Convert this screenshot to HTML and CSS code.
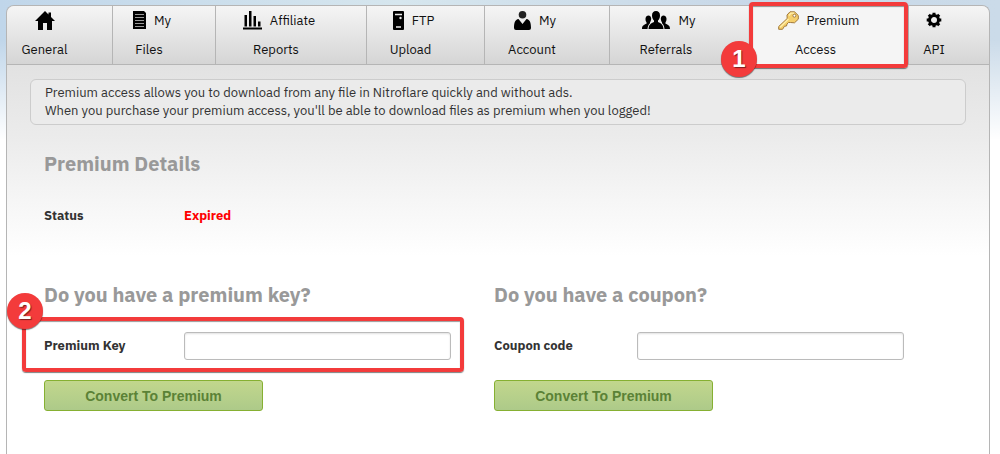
FILE: index.html
```html
<!DOCTYPE html>
<html lang="en">
<head>
  <meta charset="UTF-8" />
  <meta name="viewport" content="width=device-width, initial-scale=1.0"/>
  <title>Premium Access</title>
  <link rel="stylesheet" href="styles.css">
</head>
<body>
  <div class="panel">
    <nav class="tabs">
      <a class="tab" href="#">
        <span class="tab-top">
          <svg width="20" height="20" viewBox="0 0 20 20"><path d="M10 0 L13.5 3.4 V1.5 H16 V6 L20 10 H17 V19 H12 V12 H8 V19 H3 V10 H0 Z"/></svg>
        </span>
        <span>General</span>
      </a>
      <a class="tab" href="#">
        <span class="tab-top with-text">
          <svg width="13" height="20" viewBox="0 0 13 20"><path d="M0 0 H11 L13 2 V18 H0 Z"/><path d="M2 3.5H11M2 6.5H11M2 9.5H11M2 12.5H11M2 15.5H11" stroke="#999" stroke-width="1"/></svg>
          My
        </span>
        <span>Files</span>
      </a>
      <a class="tab" href="#">
        <span class="tab-top with-text">
          <svg width="19" height="20" viewBox="0 0 19 20"><path d="M0 16.500h19v2H0zM1.500 4h2.500v11.500h-2.500zM6 0h2.500v15.500H6zM10.500 5H13v10.500h-2.500zM15 10.500h2.500v5H15z"/></svg>
          Affiliate
        </span>
        <span>Reports</span>
      </a>
      <a class="tab" href="#">
        <span class="tab-top with-text">
          <svg width="11" height="20" viewBox="0 0 11 20"><rect y="0" width="11" height="19" rx="1"/><path d="M2 3.500H9M3 16H8" stroke="#eee" stroke-width="1.500"/><circle cx="7.500" cy="7" r="1.200" fill="#eee"/></svg>
          FTP
        </span>
        <span>Upload</span>
      </a>
      <a class="tab" href="#">
        <span class="tab-top with-text">
          <svg width="17" height="20" viewBox="0 0 17 20"><circle cx="8.500" cy="3.800" r="3.800" fill="#222"/><path d="M4.500 8 L8.500 13 L12.500 8 C16 8.500 17 12 17 17 Q17 19 15 19 H2 Q0 19 0 17 C0 12 1 8.500 4.500 8 Z"/></svg>
          My
        </span>
        <span>Account</span>
      </a>
      <a class="tab" href="#">
        <span class="tab-top with-text">
          <svg width="28" height="20" viewBox="0 0 28 20"><path d="M14 0 C16.500 0 18 1.500 18 4.500 C18 7 17 8.500 16 9.500 V11 C19 12.500 21 13 21.500 18 H6.500 C7 13 9 12.500 12 11 V9.500 C11 8.500 10 7 10 4.500 C10 1.500 11.500 0 14 0 Z"/><path d="M6.500 4.500 C8 4.500 9 5.500 9.200 7.500 C9.200 9.500 8.500 10.500 8 11.300 V12.200 C6.500 13.200 5.800 15 5.500 18 H0 C0 14.500 2 13.800 4.500 12.800 V11.300 C3.700 10.500 3.400 9 3.500 7.500 C3.700 5.500 5 4.500 6.500 4.500 Z"/><path d="M21.500 4.500 C20 4.500 19 5.500 18.800 7.500 C18.800 9.500 19.500 10.500 20 11.300 V12.200 C21.500 13.200 22.200 15 22.500 18 H28 C28 14.500 26 13.800 23.500 12.800 V11.300 C24.300 10.500 24.600 9 24.500 7.500 C24.300 5.500 23 4.500 21.500 4.500 Z"/></svg>
          My
        </span>
        <span>Referrals</span>
      </a>
      <a class="tab active" href="#">
        <span class="tab-top with-text">
          <svg width="21" height="20" viewBox="0 0 21 20"><path d="M12 0.800 H16.500 L20.300 4.500 V8.200 L16.500 11.800 L12.500 11.500 L10.500 11.500 L9 13 L8.500 15 L6.500 15.200 L4.500 18.300 H0.700 V15.500 L9.200 7.500 L9 4 Z" fill="#f5cf6c" stroke="#a27a3c" stroke-width="1"/><path d="M2 16.200 L10.500 8 M11 4.500 L13 2.200 H16" fill="none" stroke="#fff0ae" stroke-width="1.200"/><circle cx="16.400" cy="4.700" r="1.500" fill="#fff" stroke="#a27a3c"/></svg>
          Premium
        </span>
        <span>Access</span>
        <span class="marker marker-tab"><b class="badge badge-one">1</b></span>
      </a>
      <a class="tab" href="#">
        <span class="tab-top">
          <svg width="16" height="20" viewBox="0 0 16 20"><g stroke="#000" fill="none"><circle cx="8" cy="9" r="4.500" stroke-width="3"/><path d="M8 1.700V4M8 14V16.300M0.700 9H3M13 9H15.300M2.800 3.800L4.500 5.500M11.500 12.500L13.200 14.200M13.200 3.800L11.500 5.500M4.500 12.500L2.800 14.200" stroke-width="3"/></g></svg>
        </span>
        <span>API</span>
      </a>
    </nav>

    <div class="notice">
      Premium access allows you to download from any file in Nitroflare quickly and without ads.<br>
      When you purchase your premium access, you'll be able to download files as premium when you logged!
    </div>

    <div class="content">
      <h2>Premium Details</h2>
      <div class="row status-row">
        <span class="label">Status</span>
        <span class="expired">Expired</span>
      </div>

      <div class="forms">
        <form class="form">
          <h2>Do you have a premium key?</h2>
          <div class="row">
            <label class="label" for="premium-key">Premium Key</label>
            <input class="field" type="text" id="premium-key">
            <span class="marker marker-row"><b class="badge badge-two">2</b></span>
          </div>
          <button class="convert" type="button">Convert To Premium</button>
        </form>
        <form class="form">
          <h2>Do you have a coupon?</h2>
          <div class="row coupon-row">
            <label class="label" for="coupon-code">Coupon code</label>
            <input class="field" type="text" id="coupon-code">
          </div>
          <button class="convert" type="button">Convert To Premium</button>
        </form>
      </div>
    </div>
  </div>
</body>
</html>
```
FILE: styles.css
```css
* {
  box-sizing: border-box;
}

body {
  margin: 0;
  min-height: 100vh;
  padding: 5px 10px 0 6px;
  display: flex;
  font-family: 'IBM Plex Sans', Roboto, 'Liberation Sans', sans-serif;
  font-size: 13px;
  line-height: 18px;
  color: #333;
  background: linear-gradient(rgba(255, 255, 255, 0) 40px, #fff 140px), linear-gradient(90deg, #c0d6ea, #d6e6ee 40%, #c8d8e8 75%, #cbdbe9);
}

.panel {
  flex: 1;
  min-width: 0;
  border: 1px solid #b5b5b5;
  border-bottom: none;
  border-radius: 8px 8px 0 0;
  background: linear-gradient(#ddd, #e2e2e2 60px, #ececec 135px, #fff 250px);
}

.tabs {
  display: grid;
  grid-template-columns: 106fr 103fr 151fr 118fr 125fr 143fr 156fr 80fr;
  height: 59px;
  border-bottom: 1px solid #b5b5b5;
  border-radius: 7px 7px 0 0;
  background: linear-gradient(#f5f5f5, #d5d5d5);
}

.tab {
  position: relative;
  display: flex;
  flex-direction: column;
  align-items: center;
  gap: 10px;
  padding: 5px 30px 0 0;
  border-right: 1px solid #b5b5b5;
  color: #111;
  text-decoration: none;
  white-space: nowrap;
}

.tab:last-child {
  border-right: none;
}

.tab.active {
  background: #f5f5f5;
}

.tab-top {
  display: flex;
  align-items: center;
  gap: 8px;
  height: 20px;
}

.with-text {
  padding-left: 6px;
}

.notice {
  margin: 14px 23px 0;
  padding: 4px 14px;
  border: 1px solid #ccc;
  border-radius: 6px;
  background: #ebebeb;
}

.content {
  padding: 27px 45px 0 37px;
}

h2 {
  margin: 0;
  font-size: 20px;
  line-height: 24px;
  color: #999;
}

.row {
  position: relative;
  display: flex;
  align-items: center;
  margin: 25px 43px 20px 0;
  font-weight: bold;
}

.status-row {
  margin: 31px 0 58px;
}

.coupon-row {
  margin-right: 40px;
}

.label {
  flex: 0 0 140px;
}

.coupon-row .label {
  flex-basis: 143px;
}

.expired {
  color: #f00;
}

.forms {
  display: flex;
}

.form {
  flex: 1;
  min-width: 0;
}

.field {
  flex: 1;
  min-width: 0;
  height: 28px;
  padding: 4px 8px;
  border: 1px solid #bbb;
  border-radius: 3px;
  background: #fff;
  box-shadow: inset 0 1px 2px rgba(0, 0, 0, 0.12);
}

.convert {
  width: 219px;
  height: 31px;
  padding: 0;
  border: 1px solid #86b032;
  border-radius: 3px;
  background: linear-gradient(#c2d78d, #adca89);
  color: #5b8236;
  font-family: 'Liberation Sans', Arial, sans-serif;
  font-size: 14px;
  font-weight: bold;
  cursor: pointer;
}

/* red frames with numbered badges */
.marker {
  position: absolute;
  z-index: 1;
  border: 4px solid #f33b3b;
  border-radius: 4px;
  box-shadow: 0 1px 1px rgba(0, 0, 0, 0.5), inset 0 1px 1px rgba(0, 0, 0, 0.4);
  pointer-events: none;
}

.marker-tab {
  inset: -4px 0 -4px -4px;
}

.marker-row {
  inset: -15px -13px -12px -22px;
}

.badge {
  position: absolute;
  width: 36px;
  height: 36px;
  border-radius: 50%;
  background: #f33b3b;
  box-shadow: 0 1px 1px rgba(0, 0, 0, 0.5);
  color: #fff;
  font-family: 'Liberation Sans', Arial, sans-serif;
  font-size: 24px;
  line-height: 36px;
  text-align: center;
  text-shadow: 1px 1px 1px rgba(0, 0, 0, 0.5);
}

.badge-one {
  left: -32px;
  bottom: -13px;
}

.badge-two {
  left: -19px;
  top: -28px;
}
```
